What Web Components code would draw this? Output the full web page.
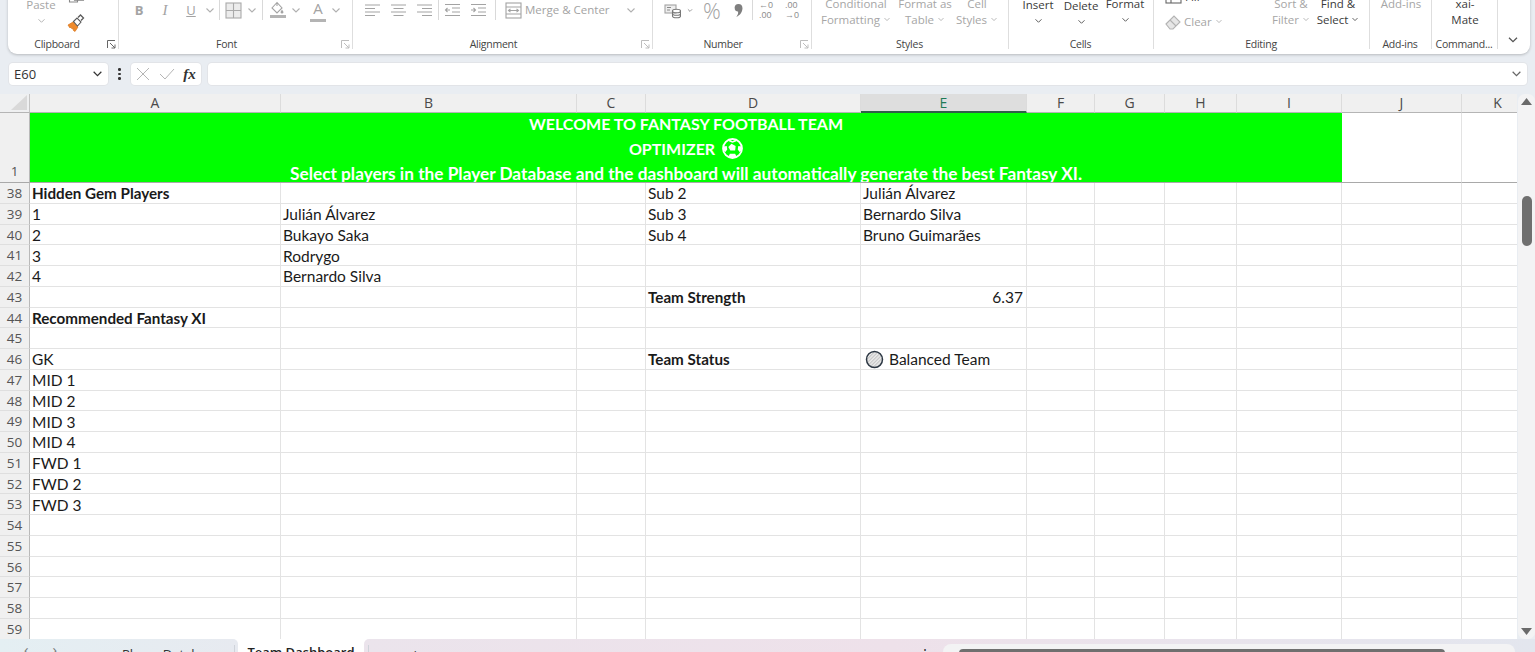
<!DOCTYPE html>
<html lang="en"><head><meta charset="utf-8"><title>Fantasy Football Team Optimizer</title>
<style>
html,body{margin:0;height:652px;overflow:hidden}
body{background:#e9edf2;font-family:"Open Sans","Liberation Sans",sans-serif;display:flex;flex-direction:column}
</style></head><body>
<x-ribbon>
  <x-group label="Clipboard" w="111" launcher>
    <x-tool w="8"></x-tool>
    <x-big w="50" d="1" chev="1" style="margin-top:3px">Paste</x-big>
    <x-tool-col>
      <x-tool ic="copy" w="20" h="18" style="margin-top:-7px"></x-tool>
      <x-tool ic="brush" w="20" h="20" style="margin-top:8px"></x-tool>
    </x-tool-col>
  </x-group>
  <x-group label="Font" w="234" launcher="dim">
    <x-tool w="7"></x-tool><x-tool t="B" w="26" st="font-weight:700;font-size:13px"></x-tool>
    <x-tool t="I" w="26" st="font-family:'Liberation Serif',serif;font-style:italic;font-size:15px"></x-tool>
    <x-tool t="U" w="26" st="text-decoration:underline;font-size:13px"></x-tool>
    <x-tool ic="chev" w="12"></x-tool><x-tool ic="sep" w="7"></x-tool>
    <x-tool ic="borders" w="20"></x-tool><x-tool ic="chev" w="18"></x-tool><x-tool ic="sep" w="2"></x-tool>
    <x-tool w="3"></x-tool><x-tool ic="fill" w="24"></x-tool><x-tool ic="chev" w="12"></x-tool>
    <x-tool w="4"></x-tool><x-tool t="A" w="24" st="font-size:15px;border-bottom:3px solid #b4b4b4;height:20px;line-height:18px;width:16px;margin:0 auto"></x-tool>
    <x-tool ic="chev" w="12"></x-tool>
  </x-group>
  <x-group label="Alignment" w="300" launcher="dim">
    <x-tool w="6"></x-tool><x-tool ic="alignl" w="26"></x-tool><x-tool ic="alignc" w="26"></x-tool><x-tool ic="alignr" w="26"></x-tool>
    <x-tool ic="sep" w="2"></x-tool><x-tool ic="outdent" w="26"></x-tool><x-tool ic="indent" w="26"></x-tool><x-tool ic="sep" w="8"></x-tool>
    <x-tool w="4"></x-tool><x-tool ic="merge" w="20"></x-tool><x-tool w="2"></x-tool>
    <x-tool t="Merge &amp; Center" w="90" st="font-size:11.5px;text-align:left;width:90px"></x-tool><x-tool w="10"></x-tool><x-tool ic="chev" w="12"></x-tool>
  </x-group>
  <x-group label="Number" w="159" launcher="dim">
    <x-tool w="4"></x-tool><x-tool ic="money" w="30"></x-tool><x-tool ic="chevd" w="6"></x-tool>
    <x-tool t="%" w="38" st="font-size:22px;font-weight:300"></x-tool><x-tool ic="comma" w="14"></x-tool><x-tool ic="sep" w="14"></x-tool>
    <x-tool ic="decl" w="14"></x-tool><x-tool w="12"></x-tool><x-tool ic="decr" w="14"></x-tool>
  </x-group>
  <x-group label="Styles" w="197">
    <x-tool w="5"></x-tool>
    <x-big w="78" d="1" style="margin-top:2px">Conditional<br>Formatting <x-mini></x-mini></x-big><x-tool w="2"></x-tool>
    <x-big w="56" d="1" style="margin-top:2px">Format as<br>Table <x-mini></x-mini></x-big>
    <x-big w="48" d="1" style="margin-top:2px">Cell<br>Styles <x-mini></x-mini></x-big>
  </x-group>
  <x-group label="Cells" w="145">
    <x-tool w="8"></x-tool>
    <x-big w="42" chev="1" style="margin-top:3px">Insert</x-big>
    <x-big w="44" chev="1" style="margin-top:4px">Delete</x-big>
    <x-big w="44" chev="1" style="margin-top:2px">Format</x-big>
  </x-group>
  <x-group label="Editing" w="216">
    <x-tool-col style="width:117px;padding-left:11px;box-sizing:border-box">
      <x-line style="margin-top:-6px" ic="fillbox">Fill <x-mini></x-mini></x-line>
      <x-line style="margin-top:7px" d="1" ic="eraser">Clear <x-mini></x-mini></x-line>
    </x-tool-col>
    <x-big w="40" d="1" style="margin-top:2px">Sort &amp;<br>Filter <x-mini></x-mini></x-big><x-tool w="2"></x-tool>
    <x-big w="50" style="margin-top:2px">Find &amp;<br>Select <x-mini></x-mini></x-big>
  </x-group>
  <x-group label="Add-ins" w="62">
    <x-big w="62" d="1" style="margin-top:2px">Add-ins</x-big>
  </x-group>
  <x-group label="Command..." w="66">
    <x-big w="66" style="margin-top:2px">xai-<br>Mate</x-big>
  </x-group>
  <x-collapse></x-collapse>
</x-ribbon>
<x-formula-bar name="E60"></x-formula-bar>
<x-sheet></x-sheet>
<x-tabs></x-tabs>

<script>
const chevPath='<path d="M1.5 1.5 5 5l3.5-3.5" fill="none" stroke="currentColor" stroke-width="1.1"/>';
const S=(b,w=16,h=16)=>`<svg width="${w}" height="${h}" viewBox="0 0 ${w} ${h}" fill="none" stroke="#a3a3a3" stroke-width="1.1">${b}</svg>`;
const DEC=(a,b)=>`<span style="display:block;font:9px/10.400px 'Liberation Sans',sans-serif;color:#8f8f8f;white-space:nowrap">${a}<br>${b}</span>`;
const ICONS={
 chev:`<svg width="10" height="7" viewBox="0 0 10 7" style="color:#b0b0b0">${chevPath}</svg>`,
 chevd:`<svg width="10" height="7" viewBox="0 0 10 7" style="color:#666">${chevPath}</svg>`,
 sep:`<span style="display:block;width:1px;height:24px;background:#d9d9d9;margin:-4px auto 0"></span>`,
 copy:S('<rect x="6.5" y="1" width="9" height="11" stroke="#555"/><path d="M4 4H1.5v10h8v-2" stroke="#888"/>',17,16),
 brush:`<svg width="18" height="18" viewBox="0 0 18 18" fill="none"><path d="M1 11l5-3 5 5-3 4.500-2-1.500 1-2-2 1-1-2-1 1z" fill="#ee8a2c" stroke="#d97418" stroke-width=".7"/><path d="M6.500 7.500 10 4l4 4-3.500 4z" fill="#fff" stroke="#5b5b5b" stroke-width="1.100"/><path d="M11 3.500 13.500 1l3 3-2.500 2.500" stroke="#5b5b5b" stroke-width="1.300"/></svg>`,
 borders:S('<rect x="1" y="1" width="15" height="15" fill="#ececec" stroke="#aaa"/><path d="M8.500 1v15M1 8.500h15" stroke="#aaa"/>',17,17),
 fill:S('<path d="M8 1.500 3 7l5 5 5-5z M8 1.500V5"/><path d="M13 8.500l1.500 2.500a1.500 1.500 0 0 1-3 0z" fill="#a3a3a3" stroke="none"/><rect x="1" y="14" width="16" height="3" fill="#b4b4b4" stroke="none"/>',18,18),
 alignl:S('<path d="M1 3h15M1 6.500h10M1 10h15M1 13.500h10"/>'),
 alignc:S('<path d="M1 3h15M3.500 6.500h10M1 10h15M3.500 13.500h10"/>'),
 alignr:S('<path d="M1 3h15M6 6.500h10M1 10h15M6 13.500h10"/>'),
 outdent:S('<path d="M1 2.500h15M8 6h8M8 10h8M1 13.500h15M6 8H1.500M3.500 6 1.500 8l2 2"/>'),
 indent:S('<path d="M1 2.500h15M8 6h8M8 10h8M1 13.500h15M1 8h4.500M3.500 6l2 2-2 2"/>'),
 merge:S('<rect x="1" y="1" width="15" height="15"/><path d="M1 5h15M1 12h15M3.500 8.500h10M5.500 6.800l-2 1.700 2 1.700M11.500 6.800l2 1.700-2 1.700"/>',17,17),
 money:S('<rect x="1" y="3" width="11" height="8" fill="#eee"/><path d="M3 5.500h4M3 8h3" stroke="#888"/><ellipse cx="12.500" cy="9" rx="4" ry="1.800" fill="#fff" stroke="#777"/><path d="M8.500 9v5c0 1 1.800 1.800 4 1.800s4-.8 4-1.800V9M8.500 11.500c0 1 1.800 1.800 4 1.800s4-.8 4-1.800" stroke="#777"/>',17,17),
 comma:`<svg width="11" height="15" viewBox="0 0 10 14"><circle cx="5" cy="4.500" r="3.600" fill="#7f7f7f"/><path d="M8.500 4.500c.5 4-2 7-5.500 8.500 1.500-2 2-3.500 1.500-5z" fill="#7f7f7f"/></svg>`,
 decl:DEC('&larr;0','.00'),
 decr:DEC('.00','&rarr;0'),
 fillbox:S('<rect x="1" y="1" width="15" height="12" stroke="#666"/><path d="M1 5h15M6 1v12" stroke="#666"/>',17,14),
 eraser:S('<path d="M1 10 9 2l6 6-7 7H5z" fill="#e6e6e6" stroke="#b3b3b3"/><path d="M5 6l6 6" stroke="#b3b3b3"/>',16,16),
};

class Base extends HTMLElement{
  render(html){ if(!this.shadowRoot) this.attachShadow({mode:'open'}); this.shadowRoot.innerHTML=html; }
}
customElements.define('x-ribbon',class extends Base{connectedCallback(){this.render(`<style>
 :host{display:flex;flex:none;box-sizing:border-box;width:1522px;height:60px;margin:-6px 0 0 8px;background:#fff;border-radius:0 0 9px 9px;box-shadow:0 1px 3px rgba(0,0,0,.22)}
 </style><slot></slot>`)}});
customElements.define('x-group',class extends Base{connectedCallback(){
  const l=this.getAttribute('launcher'); const has=this.hasAttribute('launcher');
  const c=l==='dim'?'#bdbdbd':'#666';
  const lau=has?`<svg width="9" height="9" viewBox="0 0 9 9" fill="none" stroke="${c}"><path d="M.5 8V.5H8M3 3l5 5M8 4.500V8H4.500"/></svg>`:'';
  this.render(`<style>
  :host{display:flex;flex-direction:column;flex:none;box-sizing:border-box;width:${this.getAttribute('w')}px;height:55px;border-right:1px solid #dedede}
  .c{display:flex;height:43px;align-items:flex-start}
  .l{display:grid;grid-template-columns:1fr auto 1fr;align-items:center;height:12px;font:10.5px/14px "Open Sans",sans-serif;letter-spacing:-.25px;color:#444;padding:0 2px 0 ${has?0:1}px}
  .l span{grid-column:2;white-space:nowrap;margin-right:${has?(l==='dim'?16:10):0}px}
  .l div{grid-column:3;justify-self:end;height:9px;line-height:0}
  </style><div class="c"><slot></slot></div><div class="l"><span>${this.getAttribute('label')}</span><div>${lau}</div></div>`)}});
customElements.define('x-tool',class extends Base{connectedCallback(){
  const ic=this.getAttribute('ic'),t=this.getAttribute('t'),w=this.getAttribute('w')||26,h=this.getAttribute('h')||32,st=this.getAttribute('st')||'';
  this.render(`<style>
  :host{display:flex;flex:none;width:${w}px;height:${h}px;align-items:center;justify-content:center;color:#a3a3a3;font:12px/16px "Open Sans",sans-serif;white-space:nowrap}
  div{text-align:center}</style>${ic?ICONS[ic]:(t?`<div style="${st}">${t.replace(/&/g,'&amp;')}</div>`:'')}`)}});
customElements.define('x-tool-col',class extends Base{connectedCallback(){this.render(`<style>:host{display:flex;flex-direction:column;flex:none}</style><slot></slot>`)}});
customElements.define('x-mini',class extends Base{connectedCallback(){this.render(`<style>:host{display:inline-block;vertical-align:2px;line-height:0}svg{display:block}</style><svg width="8" height="5" viewBox="0 0 10 7">${chevPath}</svg>`)}});
customElements.define('x-big',class extends Base{connectedCallback(){
  const d=this.hasAttribute('d');
  this.render(`<style>
  :host{display:block;flex:none;width:${this.getAttribute('w')}px;text-align:center;font:11.5px/16px "Open Sans",sans-serif;color:${d?'#a6a6a6':'#3a3a3a'};white-space:nowrap}
  .ch{height:16px;display:flex;align-items:center;justify-content:center;color:${d?'#b0b0b0':'#555'}}
  </style><slot></slot>${this.hasAttribute('chev')?`<div class="ch"><svg width="9" height="6" viewBox="0 0 10 7">${chevPath}</svg></div>`:''}`)}});
customElements.define('x-line',class extends Base{connectedCallback(){
  const d=this.hasAttribute('d');
  this.render(`<style>:host{display:flex;align-items:center;gap:3px;height:18px;font:11.5px/16px "Open Sans",sans-serif;color:${d?'#a6a6a6':'#444'}}</style>${ICONS[this.getAttribute('ic')]}<span><slot></slot></span>`)}});
customElements.define('x-collapse',class extends Base{connectedCallback(){this.render(`<style>
 :host{flex:1;display:flex;justify-content:flex-end;align-items:flex-start;padding:42px 11px 0 0;color:#555}</style>
 <svg width="12" height="8" viewBox="0 0 10 7">${chevPath}</svg>`)}});

customElements.define('x-formula-bar',class extends Base{connectedCallback(){this.render(`<style>
 :host{display:flex;flex:none;height:22px;margin:9px 8px 1px 9px;align-items:stretch;font:13px/22px "Open Sans",sans-serif;color:#333}
 .box{background:#fff;border-radius:4px;box-shadow:0 0 0 1px #e2e4e8;display:flex;align-items:center}
 .name{width:99px;padding:0 5px;box-sizing:border-box;justify-content:space-between}
 .dots{width:23px;display:flex;flex-direction:column;align-items:center;justify-content:center;gap:2px}
 .dots i{width:2.500px;height:2.500px;background:#333;border-radius:50%}
 .fx{width:70px;justify-content:space-around;padding:0 1px;box-sizing:border-box;margin-right:7px}
 .f{font:italic 700 15px "Liberation Serif",serif;color:#333}
 .in{flex:1;justify-content:flex-end;padding-right:5px;color:#666}
 </style>
 <div class="box name"><span>${this.getAttribute('name')}</span><svg width="11" height="8" viewBox="0 0 10 7" style="color:#333">${chevPath}</svg></div>
 <div class="dots"><i></i><i></i><i></i></div>
 <div class="box fx"><svg width="14" height="14" viewBox="0 0 14 14" stroke="#b5b5b5" fill="none"><path d="M1 1l12 12M13 1 1 13"/></svg><svg width="16" height="14" viewBox="0 0 16 14" stroke="#b5b5b5" fill="none"><path d="M1 7l5 5L15 2"/></svg><span class="f">fx</span></div>
 <div class="box in"><svg width="11" height="8" viewBox="0 0 10 7">${chevPath}</svg></div>`)}});

customElements.define('x-sheet',class extends Base{connectedCallback(){
 const cols=['A','B','C','D','E','F','G','H','I','J','K'];
 const widths=[251,296,69,215,166,68,70,72,105,120,72];
 const ball=`<svg class="ball" width="21" height="21" viewBox="0 0 20 20"><circle cx="10" cy="10" r="9" fill="none" stroke="#fff" stroke-width="1.800"/><path d="M9 5.500 13 7.500l-.5 4.500H8L6 8.500z" fill="#fff"/><path d="M7 1.500 10 3l3-1.500.8 1.600L10 4.500 6.500 3zM1.500 8l3-.5L5 11l-2 2.500-1.500-2zM18.500 8l-3-.5L15 11l2 2.500 1.500-2zM6 18l1.500-3h5l1.500 3-4 1z" fill="#fff"/></svg>`;
 const status=`<svg class="st" width="19" height="19" viewBox="0 0 19 19"><defs><pattern id="h" width="2.500" height="2.500" patternUnits="userSpaceOnUse" patternTransform="rotate(45)"><rect width="2.500" height="2.500" fill="#ececec"/><rect width="1.100" height="2.500" fill="#c4c4c4"/></pattern></defs><circle cx="9.500" cy="9.500" r="8" fill="url(#h)" stroke="#2d3844" stroke-width="1.500"/></svg>`;
 const data={
  38:{A:['Hidden Gem Players','b'],D:['Sub 2'],E:['Julián Álvarez']},
  39:{A:['1'],B:['Julián Álvarez'],D:['Sub 3'],E:['Bernardo Silva']},
  40:{A:['2'],B:['Bukayo Saka'],D:['Sub 4'],E:['Bruno Guimarães']},
  41:{A:['3'],B:['Rodrygo']},
  42:{A:['4'],B:['Bernardo Silva']},
  43:{D:['Team Strength','b'],E:['6.37','r']},
  44:{A:['Recommended Fantasy XI','b']},
  46:{A:['GK'],D:['Team Status','b'],E:[status+'<span>Balanced Team</span>','s']},
  47:{A:['MID 1']},48:{A:['MID 2']},49:{A:['MID 3']},50:{A:['MID 4']},
  51:{A:['FWD 1']},52:{A:['FWD 2']},53:{A:['FWD 3']},
 };
 let h='<div class="corner"><svg width="16" height="15" viewBox="0 0 16 15"><path d="M16 0v15H0z" fill="#d9d9d9"/></svg></div>';
 cols.forEach(c=>h+=`<div class="ch${c==='E'?' sel':''}">${c}</div>`);
 h+='<div class="rh one">1</div>';
 h+=`<div class="banner"><div class="up">WELCOME TO FANTASY FOOTBALL TEAM</div><div class="up">OPTIMIZER ${ball}</div><div>Select players in the Player Database and the dashboard will automatically generate the best Fantasy XI.</div></div>`;
 h+='<div class="c one"></div><div class="c one"></div>';
 for(let r=38;r<=59;r++){
   h+=`<div class="rh">${r}</div>`;
   cols.forEach(c=>{const d=(data[r]||{})[c];h+=`<div class="c${d&&d[1]?' '+d[1]:''}">${d?d[0]:''}</div>`});
 }
 this.render(`<style>
 :host{display:flex;flex:none;height:545px;margin-top:8px;overflow:hidden}
 .g{flex:none;width:1517px;display:grid;grid-template-columns:30px ${widths.map(w=>w+'px').join(' ')};grid-template-rows:19px 70px repeat(22,20.76px);background:#fff;font:15.5px/20px Lato,"Liberation Sans",sans-serif;color:#1a1a1a;overflow:hidden}
 .corner{background:#eff0f1;display:flex;align-items:flex-end;justify-content:flex-end;padding:0 2px 2px 0;box-sizing:border-box;border-right:1px solid #c4c4c4;border-bottom:1px solid #b5b5b5}
 .ch{background:#f0f0f0;border-right:1px solid #dcdcdc;border-bottom:1px solid #b5b5b5;text-align:center;font:14px/18px "Open Sans",sans-serif;color:#4a4a4a;box-sizing:border-box}
 .ch.sel{background:#dedede;border-bottom:2px solid #2f5f48;color:#1f7a56}
 .rh{background:#f0f0f0;border-right:1px solid #b9b9b9;border-bottom:1px solid #dfdfdf;text-align:center;font:13.500px/21px "Open Sans",sans-serif;color:#555;box-sizing:border-box}
 .rh.one{display:flex;align-items:flex-end;justify-content:center;border-bottom:1px solid #a9a9a9}
 .c{border-right:1px solid #e3e3e3;border-bottom:1px solid #e3e3e3;padding:1px 2px 0 2px;box-sizing:border-box;white-space:nowrap;line-height:20px;display:flex;align-items:center}
 .c.one{border-bottom:1px solid #a9a9a9}
 .c.b{font-weight:700;font-size:15.2px}
 .c.r{justify-content:flex-end;padding-right:3px}
 .c.s{gap:5px;padding-left:4px}
 .banner{grid-column:2 / span 9;background:#00ff00;color:#fff;font:700 17.25px/24.700px Lato,"Open Sans",sans-serif;text-align:center;border-bottom:1px solid #a9a9a9;box-sizing:border-box;overflow:hidden}
 .banner div{height:24.500px;white-space:nowrap}
 .banner .up{line-height:22.700px;font-size:16px}
 .ball{vertical-align:-4px;margin-left:3px}
 .st{flex:none}
 .v{flex:none;width:17px;margin-left:1px;background:#f3f3f4;border-radius:7px;display:flex;flex-direction:column;align-items:center;justify-content:space-between;padding:4px 0 4px;box-sizing:border-box;height:545px}
 .thumb{width:10px;height:50px;background:#6f6f6f;border-radius:5px;margin-top:91px;margin-bottom:auto}
 </style><div class="g">${h}</div><div class="v"><svg width="11" height="7" viewBox="0 0 11 7"><path d="M5.500 0 11 7H0z" fill="#6a6a6a"/></svg><div class="thumb"></div><svg width="11" height="7" viewBox="0 0 11 7"><path d="M5.500 7 11 0H0z" fill="#6a6a6a"/></svg></div>`);
}});

customElements.define('x-tabs',class extends Base{connectedCallback(){this.render(`<style>
 :host{display:flex;flex:none;height:24px;background:#fff;font:13px/24px "Open Sans",sans-serif;color:#333}
 .l{width:238px;flex:none;background:linear-gradient(90deg,#e4eff3,#e7eaf0);border-radius:0 5px 0 0;display:flex;box-sizing:border-box;padding:0 3px 0 24px}
 .nav{display:flex;gap:24px;color:#777;font-size:15px;line-height:14px;width:70px;padding-top:3px}
 .t{white-space:nowrap;line-height:24px;padding:3px 0 0 28px;flex:1}
 .sp{width:1px;height:24px;background:#cfd3da;margin-top:6px}
 .a{width:126px;flex:none;box-sizing:border-box;text-align:center;font-weight:600;line-height:22px;color:#222;padding-top:2px;white-space:nowrap}
 .r{flex:1;background:linear-gradient(90deg,#ebe4ec 0%,#eee1ea 45%,#e3e6ee 100%);border-radius:5px 0 0 0;display:flex;align-items:flex-start}
 .r .sp{margin:6px 0 0 4px}
 .plus{margin-left:42px;font-size:15px;line-height:12px;padding-top:9px;color:#333}
 .dots{margin-left:499px;padding-top:9px;font-size:12px;line-height:12px;color:#222}
 .track{margin-left:12px;margin-top:5px;width:572px;height:19px;background:#f3f3f4;border-radius:8px 8px 0 0;display:flex;padding:5px 0 0 16px;box-sizing:border-box}
 .th{width:486px;height:8px;background:#6f6f6f;border-radius:4px}
 </style><div class="l"><div class="nav"><span>&lsaquo;</span><span>&rsaquo;</span></div><div class="t">Player Database</div><div class="sp"></div></div><div class="a">Team Dashboard</div><div class="r"><div class="sp"></div><span class="plus">+</span><span class="dots">&#8942;</span><div class="track"><div class="th"></div></div></div>`)}});
</script>
</body></html>
